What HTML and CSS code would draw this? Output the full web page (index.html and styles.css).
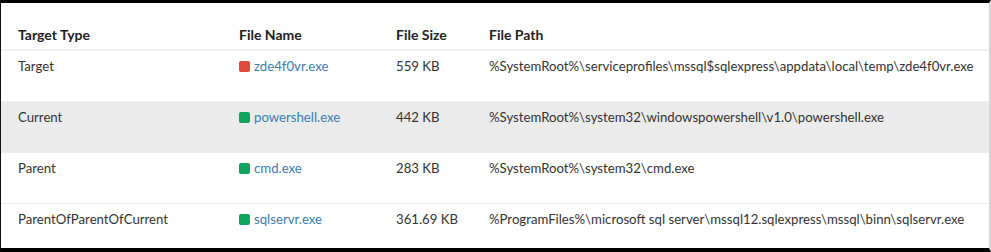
FILE: index.html
```html
<!DOCTYPE html>
<html lang="en">
<head>
  <meta charset="UTF-8">
  <title>Process Files</title>
  <link rel="stylesheet" href="styles.css">
</head>
<body>
  <div class="frame">
    <table class="files">
      <colgroup>
        <col class="col-type">
        <col class="col-name">
        <col class="col-size">
        <col>
      </colgroup>
      <thead>
        <tr>
          <th>Target Type</th>
          <th>File Name</th>
          <th>File Size</th>
          <th>File Path</th>
        </tr>
      </thead>
      <tbody>
        <tr>
          <td>Target</td>
          <td><span class="dot bad"></span><a href="#">zde4f0vr.exe</a></td>
          <td>559 KB</td>
          <td>%SystemRoot%\serviceprofiles\mssql$sqlexpress\appdata\local\temp\zde4f0vr.exe</td>
        </tr>
        <tr class="current">
          <td>Current</td>
          <td><span class="dot ok"></span><a href="#">powershell.exe</a></td>
          <td>442 KB</td>
          <td>%SystemRoot%\system32\windowspowershell\v1.0\powershell.exe</td>
        </tr>
        <tr>
          <td>Parent</td>
          <td><span class="dot ok"></span><a href="#">cmd.exe</a></td>
          <td>283 KB</td>
          <td>%SystemRoot%\system32\cmd.exe</td>
        </tr>
        <tr>
          <td>ParentOfParentOfCurrent</td>
          <td><span class="dot ok"></span><a href="#">sqlservr.exe</a></td>
          <td>361.69 KB</td>
          <td>%ProgramFiles%\microsoft sql server\mssql12.sqlexpress\mssql\binn\sqlservr.exe</td>
        </tr>
      </tbody>
    </table>
  </div>
</body>
</html>
```

FILE: styles.css
```css
* { box-sizing: border-box; }

body {
  margin: 0;
  background: #000;
  font-family: Lato, 'Noto Sans', sans-serif;
  font-size: 13.2px;
  color: #333;
}

.frame {
  height: 252px;
  border-top: 3px solid #000;
  border-bottom: 4px solid #000;
  border-left: 1px solid #111;
  border-right: 2px solid #d6d6d6;
  background: #fff;
  overflow: hidden;
}

.files {
  width: 100%;
  border-collapse: collapse;
  table-layout: fixed;
}

.col-type { width: 221px; }
.col-name { width: 157px; }
.col-size { width: 93px; }

th {
  height: 47px;
  padding: 0 17px 6px;
  text-align: left;
  vertical-align: bottom;
  font-size: 14px;
  font-weight: bold;
  line-height: 16px;
  color: #222;
  border-bottom: 2px solid #f1f1f1;
}

td {
  height: 51px;
  padding: 7px 17px 0;
  vertical-align: top;
  line-height: 16px;
  white-space: nowrap;
  border-top: 1px solid #eee;
}

tbody tr:first-child td { border-top: none; }

tr.current td { background: #ebebeb; }

a {
  color: #3d7cb3;
  text-decoration: none;
}

.dot {
  display: inline-block;
  width: 11px;
  height: 11px;
  margin-right: 4px;
  border-radius: 2px;
  vertical-align: -1px;
}

.dot.bad { background: #e04a3b; }
.dot.ok { background: #0fa35c; }
```
